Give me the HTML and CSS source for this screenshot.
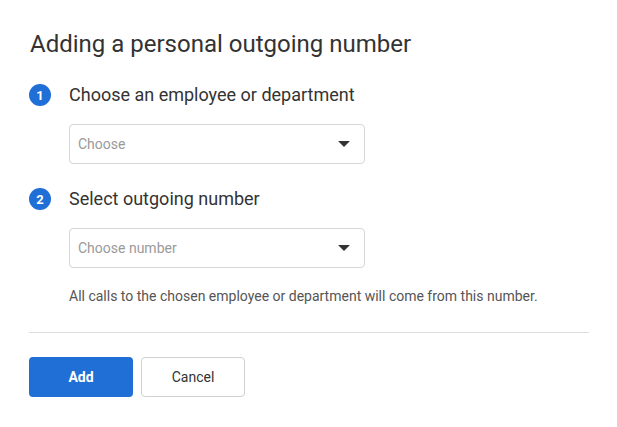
FILE: index.html
```html
<!DOCTYPE html>
<html>
<head>
<meta charset="utf-8">
<link rel="stylesheet" href="styles.css">
</head>
<body>
<div class="dialog">
  <h1 class="title">Adding a personal outgoing number</h1>
  <div class="step">
    <div class="step-head"><span class="num">1</span><span class="label">Choose an employee or department</span></div>
    <div class="select"><span class="ph">Choose</span><span class="caret"></span></div>
  </div>
  <div class="step step2">
    <div class="step-head"><span class="num">2</span><span class="label">Select outgoing number</span></div>
    <div class="select"><span class="ph">Choose number</span><span class="caret"></span></div>
    <p class="note">All calls to the chosen employee or department will come from this number.</p>
  </div>
  <div class="divider"></div>
  <div class="actions">
    <button class="btn primary">Add</button>
    <button class="btn secondary">Cancel</button>
  </div>
</div>
</body>
</html>
```
FILE: styles.css
```css
html, body { margin: 0; padding: 0; background: #fff; }
body { font-family: Roboto, "Noto Sans", sans-serif; color: #333; }
.dialog { padding: 30px 28px 0 29px; }
.title { margin: 0 0 0 1px; font-size: 24px; font-weight: 400; line-height: 28px; color: #333; }
.step { margin-top: 25px; }
.step2 { margin-top: 23px; }
.step-head { display: flex; align-items: center; gap: 18px; height: 24px; }
.num { width: 22px; height: 22px; border-radius: 50%; background: #1f6fd6; color: #fff; font-size: 13px; font-weight: 700; display: flex; align-items: center; justify-content: center; }
.label { font-size: 18px; line-height: 24px; color: #333; }
.select { margin: 17px 0 0 40px; height: 38px; border: 1px solid #d6d6d6; border-radius: 4px; display: flex; align-items: center; justify-content: space-between; padding: 0 14px 0 8px; box-sizing: content-box; width: 272px; }
.ph { font-size: 14px; color: #9a9a9a; }
.caret { width: 0; height: 0; border-left: 6px solid transparent; border-right: 6px solid transparent; border-top: 6px solid #333; border-radius: 1px; }
.note { margin: 19px 0 0 40px; font-size: 14px; line-height: 18px; color: #555; }
.divider { margin-top: 27px; height: 1px; background: #ddd; }
.actions { display: flex; gap: 8px; margin-top: 24px; }
.btn { width: 104px; height: 40px; border-radius: 4px; font-family: Roboto, sans-serif; font-size: 14px; cursor: pointer; }
.primary { background: #1f6fd6; border: none; color: #fff; font-weight: 700; }
.secondary { background: #fff; border: 1px solid #d0d0d0; color: #333; }
```
